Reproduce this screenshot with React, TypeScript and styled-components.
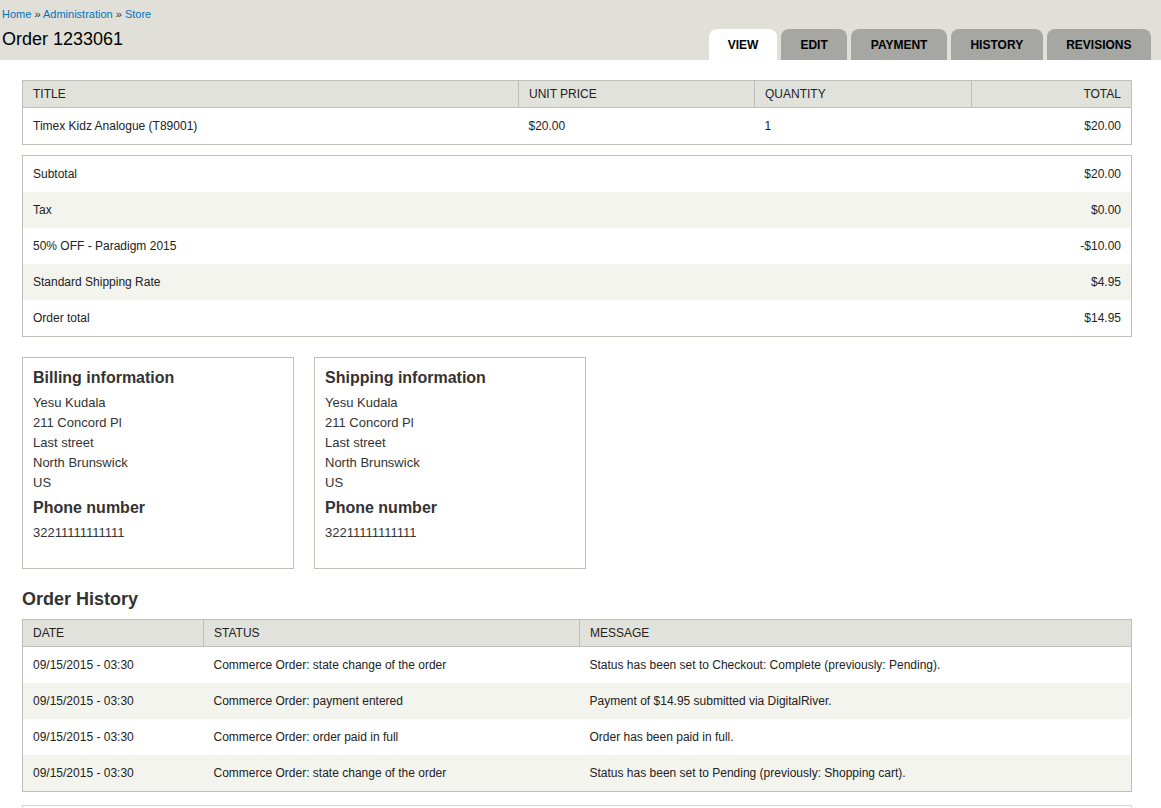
import React from "react";
import styled, { createGlobalStyle } from "styled-components";

const GlobalStyle = createGlobalStyle`
    html, body {
        margin: 0;
        padding: 0;
        background: #fff;
        font-family: "Liberation Sans", Arial, sans-serif;
        color: #333;
    }
`;

const Header = styled.div`
    display: flex;
    justify-content: space-between;
    align-items: flex-end;
    height: 60px;
    padding: 0 10px 0 2px;
    background: #e0e0d8;
    box-sizing: border-box;
`;

const TitleBlock = styled.div`
    display: flex;
    flex-direction: column;
    align-self: flex-start;
    padding-top: 7px;
`;

const Breadcrumb = styled.div`
    font-size: 11px;
    line-height: 14px;
    color: #333;

    a {
        color: #0074bd;
        text-decoration: none;
    }
`;

const PageTitle = styled.h1`
    margin: 4px 0 0;
    font-size: 18px;
    font-weight: normal;
    line-height: 28px;
    color: #000;
`;

const Tabs = styled.ul`
    display: flex;
    gap: 4px;
    margin: 0;
    padding: 0;
    list-style: none;
`;

const Tab = styled.li<{ $active?: boolean }>`
    height: 31px;
    padding: 1px ${(p) => (p.$active ? 18.5 : 19.5)}px 0;
    box-sizing: border-box;
    display: flex;
    align-items: center;
    border-radius: 8px 8px 0 0;
    background: ${(p) => (p.$active ? "#fff" : "#a6a7a2")};
    color: #000;
    font-size: 12px;
    font-weight: bold;
    text-transform: uppercase;
`;

const Content = styled.div`
    padding: 20px 29px 0 22px;
`;

const Table = styled.table<{ $gap?: number }>`
    width: 100%;
    border-collapse: collapse;
    border: 1px solid #bebfb9;
    margin-bottom: ${(p) => p.$gap ?? 10}px;
    font-size: 12px;
    color: #222;
`;

const Th = styled.th<{ $right?: boolean }>`
    height: 26px;
    padding: 0 10px;
    background: #e1e2dc;
    border-bottom: 1px solid #bebfb9;
    border-left: 1px solid #bebfb9;
    text-align: ${(p) => (p.$right ? "right" : "left")};
    font-weight: normal;
    text-transform: uppercase;
    color: #222;
`;

const Tr = styled.tr<{ $striped?: boolean }>`
    background: ${(p) => (p.$striped ? "#f3f4ee" : "#fff")};
`;

const Td = styled.td<{ $right?: boolean }>`
    height: 36px;
    padding: 0 10px;
    text-align: ${(p) => (p.$right ? "right" : "left")};
`;

const Panes = styled.div`
    display: flex;
    gap: 20px;
    margin: 20px 0 0;
`;

const Pane = styled.div`
    width: 272px;
    height: 212px;
    box-sizing: border-box;
    border: 1px solid #bebfb9;
    padding: 10px 10px 8px;
    font-size: 13px;
    line-height: 20px;
    color: #333;
`;

const PaneHeading = styled.h3`
    margin: 0 0 5px;
    font-size: 16px;
    line-height: 20px;
    font-weight: bold;
    color: #333;

    & ~ & {
        margin-top: 5px;
    }
`;

const SectionHeading = styled.h2`
    margin: 19px 0 9px;
    font-size: 18px;
    line-height: 22px;
    font-weight: bold;
    color: #333;
`;

const NextBox = styled.div`
    height: 20px;
    border: 1px solid #d8d8d2;
    border-bottom: none;
`;

const totals = [
    ["Subtotal", "$20.00"],
    ["Tax", "$0.00"],
    ["50% OFF - Paradigm 2015", "-$10.00"],
    ["Standard Shipping Rate", "$4.95"],
    ["Order total", "$14.95"],
];

const history = [
    ["Commerce Order: state change of the order", "Status has been set to Checkout: Complete (previously: Pending)."],
    ["Commerce Order: payment entered", "Payment of $14.95 submitted via DigitalRiver."],
    ["Commerce Order: order paid in full", "Order has been paid in full."],
    ["Commerce Order: state change of the order", "Status has been set to Pending (previously: Shopping cart)."],
];

const address = ["Yesu Kudala", "211 Concord Pl", "Last street", "North Brunswick", "US"];

const AddressPane: React.FC<{ title: string }> = ({ title }) => (
    <Pane>
        <PaneHeading>{title}</PaneHeading>
        {address.map((line) => (
            <div key={line}>{line}</div>
        ))}
        <PaneHeading>Phone number</PaneHeading>
        <div>32211111111111</div>
    </Pane>
);

const App: React.FC = () => {
    return (
        <>
            <GlobalStyle />
            <Header>
                <TitleBlock>
                    <Breadcrumb>
                        <a href="#">Home</a> » <a href="#">Administration</a> » <a href="#">Store</a>
                    </Breadcrumb>
                    <PageTitle>Order 1233061</PageTitle>
                </TitleBlock>
                <Tabs>
                    <Tab $active>View</Tab>
                    <Tab>Edit</Tab>
                    <Tab>Payment</Tab>
                    <Tab>History</Tab>
                    <Tab>Revisions</Tab>
                </Tabs>
            </Header>
            <Content>
                <Table>
                    <thead>
                        <tr>
                            <Th style={{ width: 475 }}>Title</Th>
                            <Th style={{ width: 215 }}>Unit price</Th>
                            <Th style={{ width: 196 }}>Quantity</Th>
                            <Th $right>Total</Th>
                        </tr>
                    </thead>
                    <tbody>
                        <Tr>
                            <Td>Timex Kidz Analogue (T89001)</Td>
                            <Td>$20.00</Td>
                            <Td>1</Td>
                            <Td $right>$20.00</Td>
                        </Tr>
                    </tbody>
                </Table>

                <Table $gap={0}>
                    <tbody>
                        {totals.map(([label, value], i) => (
                            <Tr key={label} $striped={i % 2 === 1}>
                                <Td>{label}</Td>
                                <Td $right>{value}</Td>
                            </Tr>
                        ))}
                    </tbody>
                </Table>

                <Panes>
                    <AddressPane title="Billing information" />
                    <AddressPane title="Shipping information" />
                </Panes>

                <SectionHeading>Order History</SectionHeading>
                <Table $gap={13}>
                    <thead>
                        <tr>
                            <Th style={{ width: 160 }}>Date</Th>
                            <Th style={{ width: 355 }}>Status</Th>
                            <Th>Message</Th>
                        </tr>
                    </thead>
                    <tbody>
                        {history.map(([status, message], i) => (
                            <Tr key={i} $striped={i % 2 === 1}>
                                <Td>09/15/2015 - 03:30</Td>
                                <Td>{status}</Td>
                                <Td>{message}</Td>
                            </Tr>
                        ))}
                    </tbody>
                </Table>
                <NextBox />
            </Content>
        </>
    );
};

export default App;
